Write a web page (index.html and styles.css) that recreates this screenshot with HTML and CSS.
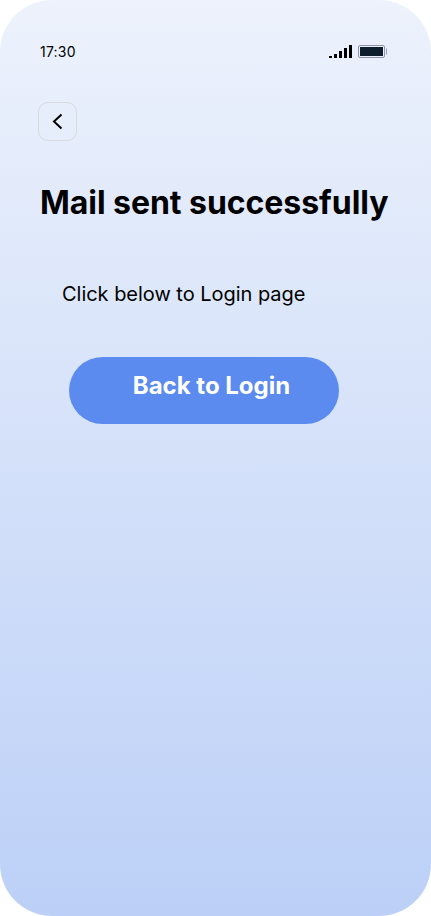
FILE: index.html
```html
<!DOCTYPE html>
<html lang="en">
<head>
<meta charset="utf-8">
<title>Mail sent</title>
<link rel="stylesheet" href="styles.css">
</head>
<body>
<main class="screen">
  <header class="status">
    <span class="time">17:30</span>
    <svg class="signals" width="60" height="16" viewBox="0 0 60 16" aria-hidden="true">
      <path d="M1 13h3v2h-3zM6 11h3v4h-3zM11 8h3v7h-3zM16 5h3v10h-3zM21 2h3v13h-3z" fill="#000"/>
      <rect x="30.5" y="2.5" width="26" height="12" rx="1.5" fill="none" stroke="#9096a8"/>
      <rect x="32" y="4" width="23" height="9" fill="#0d1f2d"/>
      <path d="M58.5 5.5v6" stroke="#9ba1b2"/>
    </svg>
  </header>
  <button class="back" aria-label="Back">
    <svg width="39" height="39" viewBox="0 0 39 39"><path d="M23.5 12.5l-7.5 7 7.5 7" fill="none" stroke="#000" stroke-width="2"/></svg>
  </button>
  <h1 class="title">Mail sent successfully</h1>
  <p class="hint">Click below to Login page</p>
  <button class="login">Back to Login</button>
</main>
</body>
</html>
```
FILE: styles.css
```css
body { margin: 0; background: #fff; font-family: Inter, sans-serif; color: #000; }
.screen { box-sizing: border-box; width: 431px; height: 916px; padding: 43px 0 0 38px; border-radius: 52px; background: linear-gradient(#edf2fc, #bcd0f7); overflow: hidden; }
.status { display: flex; justify-content: space-between; height: 18px; padding: 0 43px 0 2px; }
.time { font-size: 14px; line-height: 18px; letter-spacing: 0.2px; }
.signals { display: block; }
.back { display: block; box-sizing: border-box; width: 39px; height: 39px; margin: 41px 0 0; padding: 0; border: 1px solid #d8dadc; border-radius: 10px; background: none; }
.back svg { display: block; margin: -1px; }
.title { margin: 42px 0 0 2px; font-size: 32px; line-height: 40px; font-weight: 700; letter-spacing: -0.05px; white-space: nowrap; }
.hint { margin: 59px 0 0 24px; font-size: 20px; line-height: 24px; letter-spacing: -0.03px; }
.login { display: block; box-sizing: border-box; width: 270px; height: 67px; margin: 51px 0 0 31px; padding: 0 0 10px 15px; border: 0; border-radius: 34px; background: #5b8bee; color: #fff; font: 700 24px/30px Inter, sans-serif; }
```
